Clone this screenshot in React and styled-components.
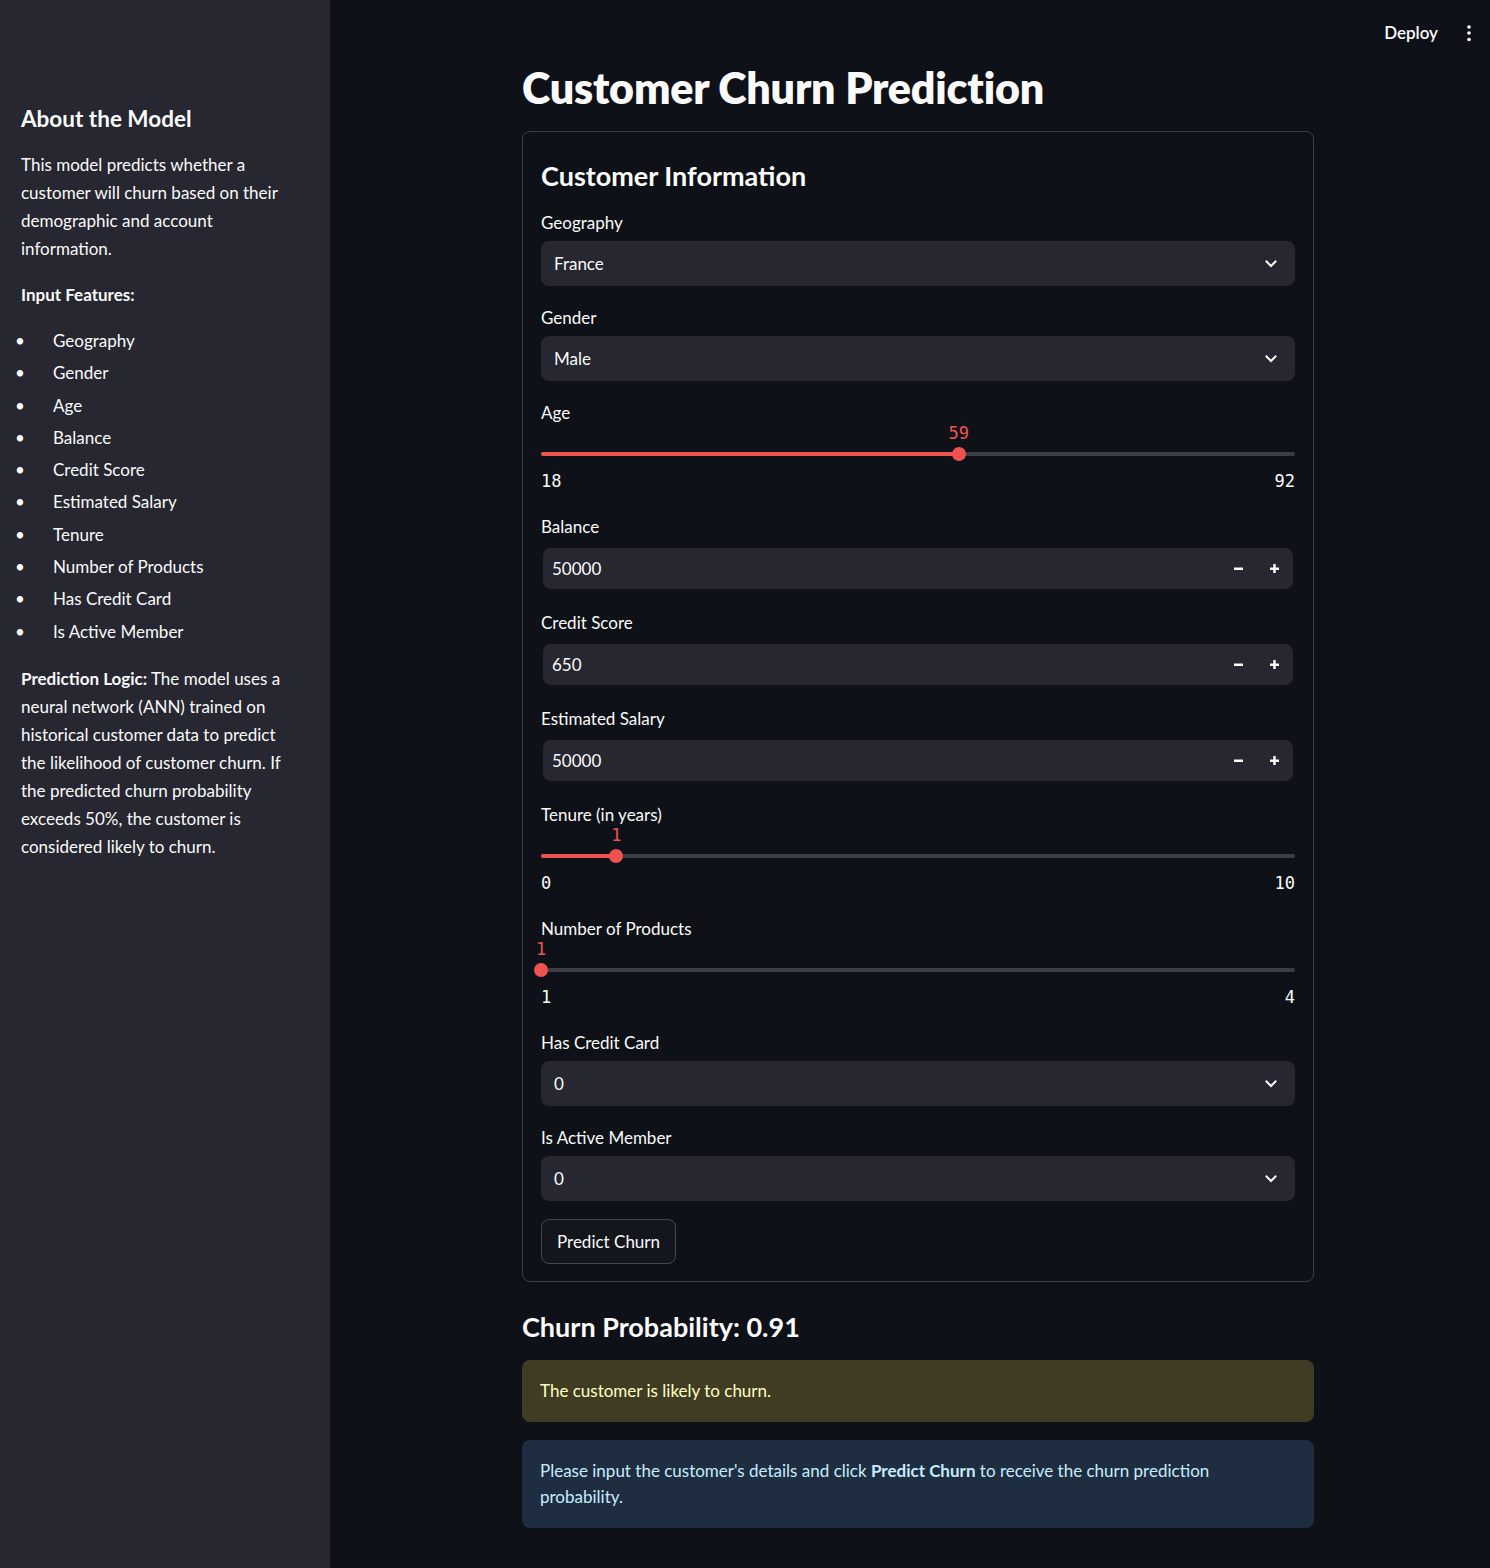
import React from 'react';
import styled, { createGlobalStyle } from 'styled-components';

const RED = '#f0524f';

const GlobalStyle = createGlobalStyle`
  html, body {
    margin: 0;
    padding: 0;
    background: #0e1117;
    color: #fafafa;
    font-family: Lato, "Noto Sans", sans-serif;
  }
  * { box-sizing: border-box; }
`;

const Page = styled.div`
  display: flex;
  min-height: 1568px;
`;

const Sidebar = styled.aside`
  width: 330px;
  flex-shrink: 0;
  background: #262730;
  padding: 104px 39px 0 21px;
`;

const SideTitle = styled.h2`
  margin: 0 0 17px 0;
  font-size: 22.5px;
  line-height: 30px;
  font-weight: 700;
  white-space: nowrap;
`;

const SideText = styled.p`
  margin: 0 0 ${p => p.$mb || 18}px 0;
  font-size: 17px;
  line-height: 28px;
  b { font-weight: 700; }
`;

const FeatureList = styled.ul`
  list-style: none;
  margin: 0 0 19px 0;
  padding: 0;
  display: flex;
  flex-direction: column;
  gap: 4.3px;
`;

const FeatureItem = styled.li`
  display: flex;
  font-size: 17px;
  line-height: 28px;
  white-space: nowrap;
  &::before {
    content: '•';
    flex-shrink: 0;
    width: 38px;
    margin-left: -6px;
  }
`;

const Main = styled.main`
  flex: 1;
  display: flex;
  flex-direction: column;
`;

const TopBar = styled.div`
  height: 59px;
  display: flex;
  justify-content: flex-end;
  align-items: flex-start;
  padding: 21px 14px 0 0;
  gap: 24px;
`;

const DeployLink = styled.span`
  font-size: 17px;
  line-height: 24px;
  font-weight: 600;
`;

const MenuDots = styled.svg`
  width: 14px;
  height: 24px;
`;

const Content = styled.div`
  width: 792px;
  margin-left: 192px;
  display: flex;
  flex-direction: column;
`;

const Title = styled.h1`
  margin: 0 0 14px 0;
  font-size: 43px;
  line-height: 58px;
  font-weight: 800;
  letter-spacing: -0.2px;
`;

const FormBox = styled.div`
  border: 1px solid #3d3f45;
  border-radius: 8px;
  padding: 26px 18px 17px 18px;
  display: flex;
  flex-direction: column;
`;

const SubTitle = styled.h3`
  margin: 0 0 18px 0;
  font-size: 27px;
  line-height: 36px;
  font-weight: 700;
`;

const Field = styled.div`
  display: flex;
  flex-direction: column;
  margin-bottom: ${p => p.$mb ?? 21}px;
`;

const Label = styled.label`
  font-size: 17px;
  line-height: 22px;
  margin-bottom: ${p => p.$mb ?? 7}px;
`;

const SelectBox = styled.div`
  height: 45px;
  background: #262730;
  border-radius: 8px;
  display: flex;
  align-items: center;
  justify-content: space-between;
  padding: 0 18px 0 13px;
  font-size: 17px;
`;

const NumberBox = styled.div`
  height: 41px;
  margin: 2px;
  background: #262730;
  border-radius: 8px;
  display: flex;
  align-items: center;
  padding: 0 1px 0 9px;
  font-size: 17px;
`;

const NumberValue = styled.span`
  flex: 1;
`;

const StepButton = styled.span`
  width: 36px;
  display: flex;
  justify-content: center;
`;

const SliderWrap = styled.div`
  display: flex;
  flex-direction: column;
`;

const ValueRow = styled.div`
  position: relative;
  height: 16px;
`;

const ThumbValue = styled.span`
  position: absolute;
  top: 2px;
  transform: translateX(-50%);
  font-family: "DejaVu Sans Mono", "Liberation Mono", monospace;
  font-size: 17px;
  line-height: 14px;
  color: ${RED};
`;

const TrackArea = styled.div`
  position: relative;
  height: 28px;
  display: flex;
  align-items: center;
`;

const Track = styled.div`
  width: 100%;
  height: 4px;
  border-radius: 2px;
  background: #3c3e46;
  overflow: hidden;
`;

const TrackFill = styled.div`
  height: 100%;
  background: ${RED};
`;

const Thumb = styled.div`
  position: absolute;
  top: 7px;
  width: 14px;
  height: 14px;
  border-radius: 50%;
  background: ${RED};
  transform: translateX(-50%);
`;

const RangeRow = styled.div`
  margin-top: 3px;
  display: flex;
  justify-content: space-between;
  font-family: "DejaVu Sans Mono", "Liberation Mono", monospace;
  font-size: 17px;
  line-height: 20px;
  color: #fafafa;
`;

const Button = styled.button`
  align-self: flex-start;
  height: 45px;
  padding: 0 15px;
  background: #13161d;
  color: #fafafa;
  border: 1px solid #44464d;
  border-radius: 8px;
  font-family: inherit;
  font-size: 17px;
`;

const ResultTitle = styled.h3`
  margin: 27px 0 15px 0;
  font-size: 27px;
  line-height: 36px;
  font-weight: 700;
`;

const Alert = styled.div`
  border-radius: 8px;
  padding: 18px 40px 18px 18px;
  font-size: 17px;
  line-height: 26px;
  margin-bottom: 18px;
  background: ${p => (p.$kind === 'warning' ? '#403c23' : '#1f2d40')};
  color: ${p => (p.$kind === 'warning' ? '#ffffc2' : '#c7ebff')};
  b { font-weight: 700; }
`;

const Chevron = () => (
  <svg width="12" height="8" viewBox="0 0 12 8" fill="none">
    <path d="M1.5 1.5 L6 6 L10.5 1.5" stroke="#fafafa" strokeWidth="2" strokeLinecap="square" />
  </svg>
);

const Minus = () => (
  <svg width="11" height="11" viewBox="0 0 11 11">
    <rect x="1" y="4.5" width="9" height="2.5" fill="#fafafa" />
  </svg>
);

const Plus = () => (
  <svg width="11" height="11" viewBox="0 0 11 11">
    <rect x="1" y="4.5" width="9" height="2.5" fill="#fafafa" />
    <rect x="4.25" y="1" width="2.5" height="9" fill="#fafafa" />
  </svg>
);

const SelectField = ({ label, value, mb }) => (
  <Field $mb={mb}>
    <Label>{label}</Label>
    <SelectBox>
      <span>{value}</span>
      <Chevron />
    </SelectBox>
  </Field>
);

const NumberField = ({ label, value }) => (
  <Field>
    <Label $mb={8}>{label}</Label>
    <NumberBox>
      <NumberValue>{value}</NumberValue>
      <StepButton><Minus /></StepButton>
      <StepButton><Plus /></StepButton>
    </NumberBox>
  </Field>
);

const SliderField = ({ label, min, max, value }) => {
  const pct = ((value - min) / (max - min)) * 100;
  return (
    <Field $mb={25}>
      <Label $mb={0}>{label}</Label>
      <SliderWrap>
        <ValueRow>
          <ThumbValue style={{ left: `${pct}%` }}>{value}</ThumbValue>
        </ValueRow>
        <TrackArea>
          <Track>
            <TrackFill style={{ width: `${pct}%` }} />
          </Track>
          <Thumb style={{ left: `${pct}%` }} />
        </TrackArea>
        <RangeRow>
          <span>{min}</span>
          <span>{max}</span>
        </RangeRow>
      </SliderWrap>
    </Field>
  );
};

const features = [
  'Geography',
  'Gender',
  'Age',
  'Balance',
  'Credit Score',
  'Estimated Salary',
  'Tenure',
  'Number of Products',
  'Has Credit Card',
  'Is Active Member',
];

export default function App() {
  return (
    <>
      <GlobalStyle />
      <Page>
        <Sidebar>
          <SideTitle>About the Model</SideTitle>
          <SideText $mb={18}>
            This model predicts whether a customer will churn based on their demographic and account information.
          </SideText>
          <SideText $mb={18}>
            <b>Input Features:</b>
          </SideText>
          <FeatureList>
            {features.map(f => (
              <FeatureItem key={f}>{f}</FeatureItem>
            ))}
          </FeatureList>
          <SideText>
            <b>Prediction Logic:</b> The model uses a neural network (ANN) trained on historical customer data to
            predict the likelihood of customer churn. If the predicted churn probability exceeds 50%, the customer is
            considered likely to churn.
          </SideText>
        </Sidebar>
        <Main>
          <TopBar>
            <DeployLink>Deploy</DeployLink>
            <MenuDots viewBox="0 0 14 24">
              <circle cx="7" cy="6" r="1.8" fill="#fafafa" />
              <circle cx="7" cy="12" r="1.8" fill="#fafafa" />
              <circle cx="7" cy="18.5" r="1.8" fill="#fafafa" />
            </MenuDots>
          </TopBar>
          <Content>
            <Title>Customer Churn Prediction</Title>
            <FormBox>
              <SubTitle>Customer Information</SubTitle>
              <SelectField label="Geography" value="France" />
              <SelectField label="Gender" value="Male" />
              <SliderField label="Age" min={18} max={92} value={59} />
              <NumberField label="Balance" value="50000" />
              <NumberField label="Credit Score" value="650" />
              <NumberField label="Estimated Salary" value="50000" />
              <SliderField label="Tenure (in years)" min={0} max={10} value={1} />
              <SliderField label="Number of Products" min={1} max={4} value={1} />
              <SelectField label="Has Credit Card" value="0" />
              <SelectField label="Is Active Member" value="0" mb={18} />
              <Button>Predict Churn</Button>
            </FormBox>
            <ResultTitle>Churn Probability: 0.91</ResultTitle>
            <Alert $kind="warning">The customer is likely to churn.</Alert>
            <Alert $kind="info">
              Please input the customer's details and click <b>Predict Churn</b> to receive the churn prediction
              probability.
            </Alert>
          </Content>
        </Main>
      </Page>
    </>
  );
}
